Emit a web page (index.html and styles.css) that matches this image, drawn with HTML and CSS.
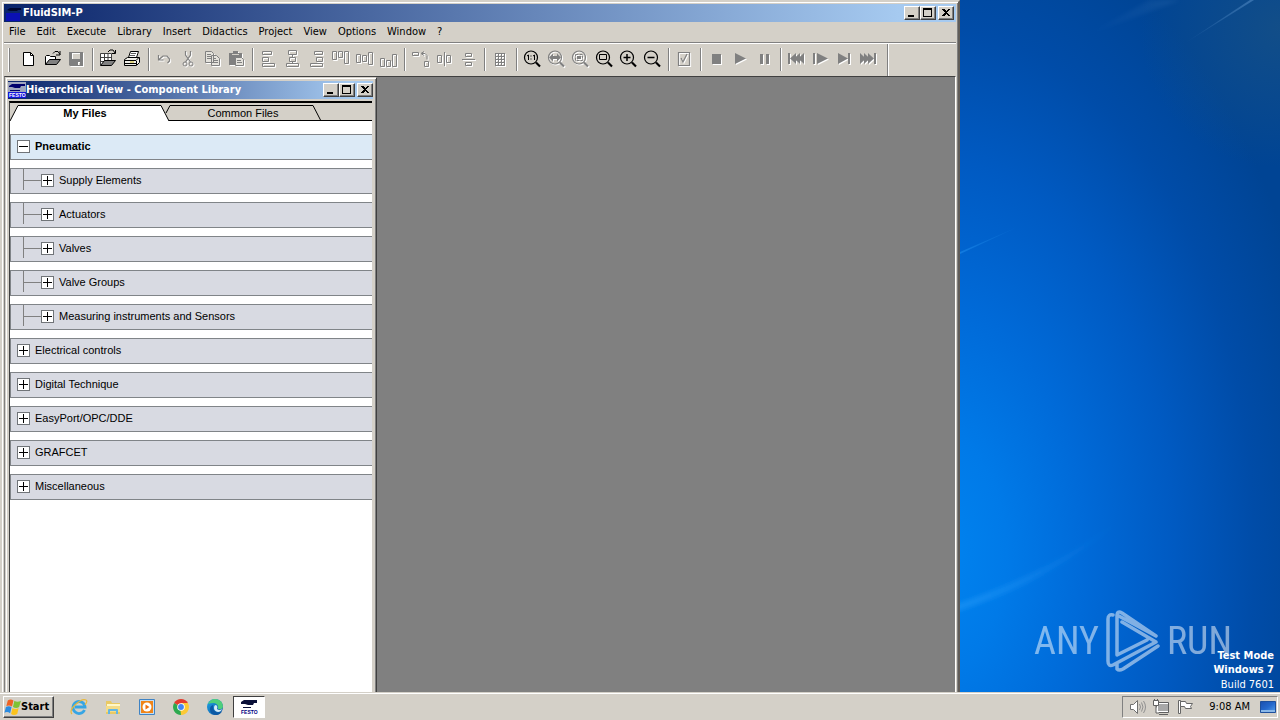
FILE: index.html
```html
<!DOCTYPE html>
<html lang="en">
<head>
<meta charset="utf-8">
<title>FluidSIM-P</title>
<link rel="stylesheet" href="styles.css">
</head>
<body>
<svg class="defs" aria-hidden="true">
  <defs>
    <symbol id="lens" viewBox="0 0 24 24"><circle cx="11" cy="10.500" r="6.500" fill="none" stroke="currentColor" stroke-width="1.200"/><path d="M16 15.500l4 4" stroke="currentColor" stroke-width="2.200"/></symbol>
    <symbol id="min" viewBox="0 0 14 12"><path d="M3 8h6v2H3z"/></symbol>
    <symbol id="max" viewBox="0 0 14 12"><path d="M2 1h9v9H2zM3 3v6h7V3z" fill-rule="evenodd"/></symbol>
    <symbol id="close" viewBox="0 0 14 12"><path d="M3 2h2l2 2 2-2h2L8 5.500l3 3.500H9L7 7 5 9H3l3-3.500z"/></symbol>
    <linearGradient id="scr" x1="0" y1="0" x2="1" y2="1"><stop offset="0" stop-color="#1a4fae"/><stop offset=".5" stop-color="#2468cc"/><stop offset="1" stop-color="#58a2ec"/></linearGradient>
    <linearGradient id="edge" x1="0" y1="0" x2="1" y2="1"><stop offset="0" stop-color="#1fa6e8"/><stop offset="1" stop-color="#0a4f9e"/></linearGradient>
  </defs>
</svg>

<main class="desktop">
  <section class="window" aria-label="FluidSIM-P">
    <header class="titlebar">
      <svg class="app-icon" viewBox="0 0 18 16"><path d="M2 8h14v8H2z" fill="#0a10b4"/><path d="M3 5l3-2h11v2h-3l-1 1H6z" fill="#000730"/></svg>
      <h1 class="title">FluidSIM-P</h1>
      <div class="caption-buttons">
        <button class="cap" aria-label="Minimize"><svg><use href="#min"/></svg></button>
        <button class="cap" aria-label="Maximize"><svg><use href="#max"/></svg></button>
        <button class="cap cap-close" aria-label="Close"><svg><use href="#close"/></svg></button>
      </div>
    </header>
    <nav class="menubar">
      <button>File</button><button>Edit</button><button>Execute</button><button>Library</button><button>Insert</button><button>Didactics</button><button>Project</button><button>View</button><button>Options</button><button>Window</button><button>?</button>
    </nav>
    <div class="toolbar" role="toolbar" aria-label="Standard">
      <div class="group">
        <button aria-label="New"><svg viewBox="0 0 24 24"><path d="M7.500 5.500h7l3 3v10h-10z" fill="#fff" stroke="#000"/><path d="M14.500 5.500v3h3" fill="none" stroke="#000"/></svg></button>
        <button aria-label="Open"><svg viewBox="0 0 24 24"><path d="M5.500 17.500v-8l1-1h3l1 1h5v3" fill="#fff" stroke="#000"/><path d="M5.500 17.500l4-5h11l-4 5z" fill="#808080" stroke="#000"/><path d="M13 6.500l2-2h3l2 3M20 4v4h-4" fill="none" stroke="#000"/></svg></button>
        <button class="off" aria-label="Save" disabled><svg viewBox="0 0 24 24"><path d="M5 5h14v14H6l-1-1zM8 6v6h8V6zM14 15v3h2v-3z" fill-rule="evenodd" fill="#808080"/></svg></button>
      </div>
      <div class="group">
        <button aria-label="Library open"><svg viewBox="0 0 24 24"><path d="M4.500 6.500h11v12h-11z" fill="#fff"/><path d="M4.500 18V6.500h11V14M5 10.500h10M5 14.500h4M8.500 7v7M12 7v7" fill="none" stroke="#404040"/><path d="M4.500 18.500l4-5h11l-4 5z" fill="#808080" stroke="#000"/><path d="M12 5l2-2h3l2 3M19.500 3v3.500H16" fill="none" stroke="#000"/></svg></button>
        <button aria-label="Print"><svg viewBox="0 0 24 24"><path d="M8.500 10.500l2-6h8l-2 6z" fill="#fff" stroke="#000"/><path d="M11 6.500h5M10 8.500h5" stroke="#606060"/><path d="M4.500 12.500l3-2h12v5l-3 3h-12z" fill="#f0eee8" stroke="#000"/><path d="M5 13.500h11l3-3M16.500 14v4" fill="none" stroke="#000"/><path d="M5 16.500h11" stroke="#000"/><path d="M10 15h4" stroke="#d0bc20"/></svg></button>
      </div>
      <div class="group">
        <button class="off" aria-label="Undo" disabled><svg viewBox="0 0 24 24"><path d="M6.500 8v5h5M7 12.500l4-3.500h4l2.500 3v2l-2 2" fill="none" stroke="#808080" stroke-width="1.200"/></svg></button>
        <button class="off" aria-label="Cut" disabled><svg viewBox="0 0 24 24"><path d="M9.500 4v4l5 7M14.500 4v4l-5 7" fill="none" stroke="#808080" stroke-width="1.200"/><circle cx="9" cy="17" r="2" fill="none" stroke="#808080"/><circle cx="15" cy="17" r="2" fill="none" stroke="#808080"/></svg></button>
        <button class="off" aria-label="Copy" disabled><svg viewBox="0 0 24 24"><path d="M5.500 4.500h6l2 2v9h-8zM11.500 8.500h5l3 3v7h-8z" fill="#e4e2dc" stroke="#808080"/><path d="M7 7.500h4M7 9.500h4M7 11.500h4M13 11.500h3M13 13.500h5M13 15.500h5" stroke="#808080"/></svg></button>
        <button class="off" aria-label="Paste" disabled><svg viewBox="0 0 24 24"><path d="M5 6h4V4h5v2h4v12H5z" fill="#808080"/><path d="M8 7.500h7" stroke="#d4d0c8"/><path d="M11.500 10.500h6l2 2v6h-8z" fill="#e4e2dc" stroke="#808080"/><path d="M13 13.500h4M13 15.500h5" stroke="#808080"/></svg></button>
      </div>
      <div class="group">
        <button class="off line" aria-label="Align left" disabled><svg viewBox="0 0 24 24"><path d="M6.500 4.500h9v3h-9zM6.500 10.500h6v4h-6zM6.500 16.500h12v3h-12z"/></svg></button>
        <button class="off line" aria-label="Align center" disabled><svg viewBox="0 0 24 24"><path d="M8.500 3.500h8v4h-8zM9.500 10.500h6v4h-6zM6.500 16.500h12v3h-12zM12.500 8v2M12.500 15v1"/></svg></button>
        <button class="off line" aria-label="Align right" disabled><svg viewBox="0 0 24 24"><path d="M10.500 4.500h8v3h-8zM12.500 10.500h6v4h-6zM6.500 16.500h12v3h-12z"/></svg></button>
        <button class="off line" aria-label="Align top" disabled><svg viewBox="0 0 24 24"><path d="M4.500 4.500h4v8h-4zM10.500 4.500h4v6h-4zM16.500 4.500h4v12h-4z"/></svg></button>
        <button class="off line" aria-label="Align middle" disabled><svg viewBox="0 0 24 24"><path d="M4.500 7.500h4v8h-4zM10.500 8.500h4v6h-4zM16.500 5.500h4v12h-4z"/></svg></button>
        <button class="off line" aria-label="Align bottom" disabled><svg viewBox="0 0 24 24"><path d="M4.500 11.500h4v8h-4zM10.500 13.500h4v6h-4zM16.500 7.500h4v12h-4z"/></svg></button>
      </div>
      <div class="group">
        <button class="off line" aria-label="Rotate" disabled><svg viewBox="0 0 24 24"><path d="M4.500 5.500h6v3h-6zM16.500 14.500h4v5h-4zM13 6.500l3-2M13 6.500l3 2M14 6.500h3l2 2v4"/></svg></button>
        <button class="off line" aria-label="Mirror horizontal" disabled><svg viewBox="0 0 24 24"><path d="M5.500 8.500h4v7h-4zM14.500 8.500h4v7h-4zM12.500 5v14"/></svg></button>
        <button class="off line" aria-label="Mirror vertical" disabled><svg viewBox="0 0 24 24"><path d="M9.500 6.500h6v3h-6zM9.500 15.500h6v3h-6zM6 12.500h13"/></svg></button>
      </div>
      <div class="group">
        <button class="off line" aria-label="Grid" disabled><svg viewBox="0 0 24 24"><path d="M7.500 6v13M10.500 6v13M13.500 6v13M16.500 6v13M7 6.500h10M7 9.500h10M7 12.500h10M7 15.500h10M7 18.500h10"/></svg></button>
      </div>
      <div class="group">
        <button aria-label="Zoom 1:1"><svg viewBox="0 0 24 24"><use href="#lens"/><path d="M7 9l1.500-1v5M13 9l1.500-1v5M11 8.500v1M11 11.500v1" fill="none" stroke="#000"/></svg></button>
        <button class="off gray" aria-label="Previous view" disabled><svg viewBox="0 0 24 24"><use href="#lens"/><path d="M5 10.500l4-4v2.500h4V6.500l4 4-4 4V12H9v2.500z" fill="#808080"/></svg></button>
        <button class="off gray" aria-label="Zoom to fit" disabled><svg viewBox="0 0 24 24"><use href="#lens"/><path d="M7.500 7.500h7v6h-7z" fill="none" stroke="#808080" stroke-dasharray="3 1"/><path d="M9 9h4v3H9z" fill="#808080"/></svg></button>
        <button aria-label="Zoom window"><svg viewBox="0 0 24 24"><use href="#lens"/><path d="M7.500 7.500h7v5h-7z" fill="none" stroke="#000"/></svg></button>
        <button aria-label="Zoom in"><svg viewBox="0 0 24 24"><use href="#lens"/><path d="M7.500 10.500h7M11 7v7" stroke="#000" stroke-width="1.500"/></svg></button>
        <button aria-label="Zoom out"><svg viewBox="0 0 24 24"><use href="#lens"/><path d="M7.500 10.500h7" stroke="#000" stroke-width="1.500"/></svg></button>
      </div>
      <div class="group">
        <button class="off line" aria-label="Check drawing" disabled><svg viewBox="0 0 24 24"><path d="M6.500 5.500h11v13h-11zM9 11l2 4 4-8" stroke-width="1.200"/></svg></button>
      </div>
      <div class="group">
        <button class="off gray" aria-label="Stop" disabled><svg viewBox="0 0 24 24"><path d="M8 7h9v10H8z"/></svg></button>
        <button class="off gray" aria-label="Start" disabled><svg viewBox="0 0 24 24"><path d="M7 6l11 5.500L7 17z"/></svg></button>
        <button class="off gray" aria-label="Pause" disabled><svg viewBox="0 0 24 24"><path d="M8 7h3v10H8zM14 7h3v10h-3z"/></svg></button>
      </div>
      <div class="group">
        <button class="off gray" aria-label="Reset" disabled><svg viewBox="0 0 24 24"><path d="M4 6h2v11H4zM12 6v11l-6-5.500zM16 6v11l-6-5.500zM20 6v11l-6-5.500z"/></svg></button>
        <button class="off gray" aria-label="Single step" disabled><svg viewBox="0 0 24 24"><path d="M5 6h2v11H5zM9 6l11 5.500L9 17z"/></svg></button>
        <button class="off gray" aria-label="Until state change" disabled><svg viewBox="0 0 24 24"><path d="M6 6l10 5.500L6 17zM16 6h2v11h-2z"/></svg></button>
        <button class="off gray" aria-label="Next topic" disabled><svg viewBox="0 0 24 24"><path d="M4 6l6 5.500L4 17zM8 6l6 5.500L8 17zM12 6l6 5.500-6 5.500zM18 6h2v11h-2z"/></svg></button>
      </div>
    </div>

    <div class="mdi">
      <section class="child" aria-label="Component Library">
        <header class="titlebar child-title">
          <svg class="app-icon" viewBox="0 0 18 16"><path d="M0 0h18v16H0z" fill="#9fa6bd"/><path d="M1 4l3-2h13v2h-4l-1 2H7L4 5H1zM2 8h10v1H2z" fill="#00006c"/><path d="M0 10h18v6H0z" fill="#1414dc"/><text x="1" y="15" class="mini light">FESTO</text></svg>
          <h2 class="title">Hierarchical View - Component Library</h2>
          <div class="caption-buttons">
            <button class="cap" aria-label="Minimize"><svg><use href="#min"/></svg></button>
            <button class="cap" aria-label="Maximize"><svg><use href="#max"/></svg></button>
            <button class="cap cap-close" aria-label="Close"><svg><use href="#close"/></svg></button>
          </div>
        </header>
        <div class="library">
          <div class="tabs" role="tablist">
            <button class="tab active" role="tab" aria-selected="true"><svg viewBox="0 0 160 16"><path d="M0 16L8 .5h143l8 15.500" fill="#fff" stroke="#000"/></svg><span>My Files</span></button>
            <button class="tab" role="tab" aria-selected="false"><svg viewBox="0 0 160 16"><path d="M4 8L9 .5h143l8 15.500H8z" fill="#d4d0c8"/><path d="M5 8L9 .5h143l8 15.500M7 15.500h153" fill="none" stroke="#000"/></svg><span>Common Files</span></button>
          </div>
          <ul class="tree">
            <li><button class="row open"><i class="box minus"></i>Pneumatic</button>
              <ul>
                <li><button class="row sub"><i class="box"></i>Supply Elements</button></li>
                <li><button class="row sub"><i class="box"></i>Actuators</button></li>
                <li><button class="row sub"><i class="box"></i>Valves</button></li>
                <li><button class="row sub"><i class="box"></i>Valve Groups</button></li>
                <li><button class="row sub"><i class="box"></i>Measuring instruments and Sensors</button></li>
              </ul>
            </li>
            <li><button class="row"><i class="box"></i>Electrical controls</button></li>
            <li><button class="row"><i class="box"></i>Digital Technique</button></li>
            <li><button class="row"><i class="box"></i>EasyPort/OPC/DDE</button></li>
            <li><button class="row"><i class="box"></i>GRAFCET</button></li>
            <li><button class="row"><i class="box"></i>Miscellaneous</button></li>
          </ul>
        </div>
      </section>
    </div>
  </section>

  <aside class="wallpaper">
    <svg class="rays" viewBox="0 0 320 692" preserveAspectRatio="none">
      <defs>
        <linearGradient id="r1"><stop offset="0" stop-color="#35a8ff" stop-opacity=".35"/><stop offset="1" stop-color="#35a8ff" stop-opacity="0"/></linearGradient>
        <linearGradient id="r2"><stop offset="0" stop-color="#6aa0d8" stop-opacity="0"/><stop offset="1" stop-color="#6aa0d8" stop-opacity=".45"/></linearGradient>
        <filter id="soft"><feGaussianBlur stdDeviation="2"/></filter>
      </defs>
      <path d="M-4 604Q90 572 160 520Q90 582-4 612z" fill="url(#r1)" filter="url(#soft)"/>
      <path d="M0 252L60 226 0 254z" fill="url(#r1)"/>
      <path d="M222 45L290 0h4z" fill="url(#r2)"/>
      <path d="M120 38L190 0h30z" fill="url(#r2)" opacity=".3" filter="url(#soft)"/>
    </svg>
    <div class="watermark">
      <span>ANY</span>
      <svg viewBox="0 0 56 62" fill="none" stroke="#fff" stroke-width="3.500" stroke-linejoin="round" stroke-linecap="round"><path d="M8 5Q3 4 3 9v42Q3 57 8 55L51 32 17 12M51 26L17 3Q12 0 12 6v39L42 30M12 54v5Q14 61 18 59L53 36M12 5L51 26"/></svg>
      <span>RUN</span>
    </div>
    <p class="build"><b>Test Mode</b><b>Windows 7</b><span>Build 7601</span></p>
  </aside>
</main>

<footer class="taskbar">
  <button class="start"><svg viewBox="0 0 18 18"><path d="M4 2q3-2 6 0L8.500 8.500Q5.500 6.500 2.500 8z" fill="#ee6224"/><path d="M11 2.500q3 2 7 0L16 9q-3 2-6.500 0z" fill="#7fc234"/><path d="M2 9q3-1.500 6 0l-1.500 6.500q-3-2-6-.5z" fill="#2b8be0"/><path d="M9 10q3 2 6.500 0L14 16.500q-3.500 2-6.500 0z" fill="#fcc31c"/></svg>Start</button>
  <div class="quick">
    <button aria-label="Internet Explorer"><svg viewBox="0 0 18 18"><path d="M14.500 12A6 6 0 1 1 15 9H5" fill="none" stroke="#36a5e4" stroke-width="2.800"/><path d="M2 16Q-1 13 5 7 12 0 16 2q2 1-1 5" fill="none" stroke="#e8b83a" stroke-width="1.200"/></svg></button>
    <button aria-label="Explorer"><svg viewBox="0 0 18 18"><path d="M2 3h5l1 2h8v11H2z" fill="#e9c964"/><path d="M3 6h13v3H3z" fill="#fff7c8"/><path d="M2 8h14v6H2z" fill="#f4dc88"/><path d="M4 16v-4q0-1 1-1h8q1 0 1 1v4h-2v-3H6v3z" fill="#62b6e4"/></svg></button>
    <button aria-label="Media Player"><svg viewBox="0 0 18 18"><path d="M1.500 1.500h15v15h-15z" fill="#c4def4" stroke="#3f83c4"/><path d="M3 3h12v12H3z" fill="#f08418"/><circle cx="9" cy="9" r="4.500" fill="#fff"/><path d="M7.500 6.500l4 2.500-4 2.500z" fill="#ee7010"/></svg></button>
    <button aria-label="Chrome"><svg viewBox="0 0 18 18"><path d="M9 9L2.100 5A8 8 0 0 1 15.900 5z" fill="#e33b2e"/><path d="M9 9L2.100 5A8 8 0 0 0 9 17z" fill="#2da94f"/><path d="M9 9h-1l1 8A8 8 0 0 0 15.900 5H9z" fill="#fcc934"/><circle cx="9" cy="9" r="3.800" fill="#fff"/><circle cx="9" cy="9" r="2.900" fill="#4285f4"/></svg></button>
    <button aria-label="Edge"><svg viewBox="0 0 18 18"><circle cx="9" cy="9" r="8" fill="url(#edge)"/><path d="M2 6Q5 0 11 1.300 17 3 17 9q-1 3-5 2 1-5-4-6Q4 5 2 6z" fill="#4fcf7c"/><path d="M7 7q-1 6 5 8 2 0 4-2-1 3-5 4-7 0-7-6 0-3 3-4z" fill="#0c59a4"/><path d="M8 10q0-3 2-3 2 1 1 4 2 2 5 0-1 3-4 3-4-1-4-4z" fill="#d4ecf8"/></svg></button>
  </div>
  <button class="task" aria-label="FluidSIM-P"><svg viewBox="0 0 20 16"><path d="M2 3l3-2h13v3h-3l-1 2H9L6 5H2zM4 8h8v1H4z" fill="#0a1038"/><text x="2" y="15" class="mini">FESTO</text></svg></button>
  <div class="tray">
    <svg viewBox="0 0 18 18"><path d="M2.500 6.500h3l4-4v13l-4-4h-3z" fill="#fff" stroke="#707070"/><path d="M11.500 6q2 3 0 6M13.500 4.500q3 4.500 0 9M15.500 3q4 6 0 12" fill="none" stroke="#909090"/></svg>
    <svg viewBox="0 0 18 18"><path d="M5.500 5.500h11v8h-11z" fill="#a8a8a8" stroke="#fff"/><path d="M4.500 4.500h12v10h-12zM7 16.500h9" fill="none" stroke="#606060"/><path d="M1.500 2.500h5v5h-5zM4 8v7h3M2.500 1v2M5.500 1v2" fill="#fff" stroke="#606060"/></svg>
    <svg viewBox="0 0 18 18"><path d="M2.500 2.500h2v13h-2z" fill="#fff" stroke="#666"/><path d="M4.500 3.500h5l1 2h6l-2 3 1 2h-6l-1-2h-4z" fill="#fff" stroke="#666"/></svg>
    <time>9:08 AM</time>
    <svg class="show" viewBox="0 0 18 18"><path d="M1.500 3.500h15v11h-15z" fill="url(#scr)" stroke="#1d4f9c"/><path d="M2 12h14v2H2z" fill="#8ab8e8"/></svg>
  </div>
</footer>
</body>
</html>
```

FILE: styles.css
```css
* { box-sizing: border-box; }
html, body { height: 100%; }
body {
  margin: 0;
  display: flex;
  flex-direction: column;
  overflow: hidden;
  font: 11px/14px "DejaVu Sans Condensed", "Noto Sans", sans-serif;
  color: #000;
  background: #d4d0c8;
}
button { font: inherit; color: inherit; border: 0; padding: 0; background: none; }
svg { display: block; }
ul { list-style: none; margin: 0; padding: 0; }
.defs { position: absolute; width: 0; height: 0; }

.desktop { flex: 1; min-height: 0; display: flex; }

/* application window */
.window {
  width: 75%;
  display: flex;
  flex-direction: column;
  padding: 2px 2px 0;
  border: solid;
  border-width: 2px 2px 0;
  border-color: #d4d0c8 #605c58 #d4d0c8 #d4d0c8;
  box-shadow: inset 1px 1px #fff, inset -1px 0 #808080;
  background: #d4d0c8;
}
.titlebar {
  display: flex;
  align-items: center;
  height: 18px;
  padding-right: 2px;
  background: linear-gradient(90deg, #0a246a, #a6caf0 94%);
  color: #fff;
  flex: none;
}
.title { flex: 1; margin: 0; font-size: 11px; font-weight: bold; line-height: 18px; white-space: nowrap; }
.app-icon { width: 18px; height: 16px; margin-right: 1px; }
.child-title .app-icon { margin-right: 0; }
.mini { font: bold 5px "Liberation Sans", sans-serif; fill: #000080; }
.mini.light { fill: #fff; }
.caption-buttons { display: flex; }
.cap {
  width: 16px;
  height: 14px;
  background: #d4d0c8;
  border: 1px solid;
  border-color: #fff #404040 #404040 #fff;
  box-shadow: inset -1px -1px #808080;
}
.cap svg { width: 14px; height: 12px; shape-rendering: crispEdges; }
.cap-close { margin-left: 2px; }

.menubar { display: flex; height: 20px; flex: none; }
.menubar button { padding: 0 6px 0 5px; line-height: 20px; }

.toolbar {
  display: flex;
  flex: none;
  height: 34px;
  padding-left: 12px;
  border-top: 1px solid #808080;
  box-shadow: inset 0 1px #fff;
  position: relative;
}
.toolbar::before { content: ""; position: absolute; left: 4px; top: 5px; width: 1px; height: 24px; background: #fff; border-right: 1px solid #808080; box-sizing: content-box; }
.group { display: flex; align-items: center; position: relative; margin-right: 8px; padding-bottom: 1px; }
.group::after { content: ""; position: absolute; right: -6px; top: 5px; bottom: 5px; border-left: 1px solid #808080; border-right: 1px solid #fff; }
.group:last-child::after { right: -9px; top: 1px; bottom: 0; }
.group button { width: 24px; height: 24px; }
.group svg { width: 24px; height: 24px; }
.off svg { filter: drop-shadow(1px 1px 0 #fff); }
.line path { fill: none; stroke: #808080; }
.gray { color: #808080; fill: #808080; }

.mdi {
  flex: 1;
  min-height: 0;
  display: flex;
  background: #808080;
  border: solid;
  border-width: 1px 1px 0;
  border-color: #404040 #fff #404040 #808080;
}

/* library window */
.child {
  flex: 0 0 372px;
  display: flex;
  flex-direction: column;
  padding: 3px 3px 0 2px;
  background: #d4d0c8;
  border: solid;
  border-width: 1px 1px 0;
  border-color: #d4d0c8 #404040 #d4d0c8 #d4d0c8;
  box-shadow: inset 1px 1px #fff, inset -1px 0 #808080;
}
.child-title { padding-right: 0; }
.library {
  flex: 1;
  min-height: 0;
  margin: 2px 1px 0;
  background: #fff;
  border-left: 1px solid #404040;
  border-top: 2px solid #000;
  font-family: "Liberation Sans", sans-serif;
}
.tabs {
  display: flex;
  height: 18px;
  align-items: flex-end;
  background: linear-gradient(#000, #000) right bottom / calc(100% - 158px) 1px no-repeat, #d4d0c8;
}
.tab { position: relative; width: 160px; height: 16px; }
.tab svg { position: absolute; inset: 0; width: 160px; height: 16px; }
.tab span { position: relative; line-height: 16px; padding-right: 10px; }
.tab + .tab { margin-left: -9px; }
.tab + .tab span { padding: 0 0 0 4px; }
.tab.active { z-index: 1; font-weight: bold; }

.tree { display: grid; gap: 8px; padding-top: 13px; }
.tree ul { display: grid; gap: 8px; padding-top: 8px; }
.row {
  display: flex;
  align-items: center;
  gap: 5px;
  width: 100%;
  height: 26px;
  padding: 0 0 2px 6px;
  text-align: left;
  background: #d8dae2;
  border: solid #808488;
  border-width: 1px 0 1px 1px;
  position: relative;
}
.row.open { background: #dceaf6; font-weight: bold; }
.row.sub { padding-left: 30px; }
.row.sub::before { content: ""; position: absolute; left: 12px; top: 0; width: 1px; height: 21px; background: #808080; }
.row.sub::after { content: ""; position: absolute; left: 12px; top: 11px; width: 18px; height: 1px; background: #808080; }
.box {
  width: 13px;
  height: 13px;
  border: 1px solid #707478;
  background:
    linear-gradient(#000, #000) center / 9px 1px no-repeat,
    linear-gradient(#000, #000) center / 1px 9px no-repeat,
    #fff;
}
.box.minus { background: linear-gradient(#000, #000) center / 9px 1px no-repeat, #fff; }

/* wallpaper */
.wallpaper {
  flex: 1;
  position: relative;
  display: flex;
  flex-direction: column;
  justify-content: flex-end;
  color: #fff;
  background:
    radial-gradient(circle at 100% 4%, rgba(30, 84, 128, .6), transparent 140px),
    radial-gradient(ellipse 125% 95% at -8% 80%, #0084f0, #007ae8 18%, #006ad8 38%, #005ac2 60%, #004ca8 80%, #004494 100%);
}
.rays { position: absolute; inset: 0; width: 100%; height: 100%; }
.watermark {
  position: absolute;
  right: 48px;
  bottom: 20px;
  display: flex;
  align-items: center;
  gap: 6px;
  opacity: .5;
  font: 400 38px/62px "Roboto Condensed", "Liberation Sans Narrow", sans-serif;
}
.watermark svg { width: 56px; height: 62px; }
.build { position: relative; margin: 0; padding: 0 6px 0 0; display: grid; text-align: right; }
.build b { font-size: 11px; }
.build span { line-height: 15px; }

/* taskbar */
.taskbar {
  flex: none;
  height: 28px;
  display: flex;
  align-items: center;
  padding: 1px 2px 0 3px;
  background: #d4d0c8;
  border-top: 1px solid #d4d0c8;
  box-shadow: inset 0 1px #fff;
}
.start {
  display: flex;
  align-items: center;
  width: 51px;
  height: 22px;
  font-weight: bold;
  border: 1px solid;
  border-color: #fff #404040 #404040 #fff;
  box-shadow: inset -1px -1px #808080;
}
.start svg { width: 17px; height: 18px; }
.quick { display: flex; gap: 16px; margin-left: 16px; }
.quick svg { width: 18px; height: 18px; }
.task {
  display: grid;
  place-items: center;
  width: 32px;
  height: 22px;
  margin-left: 9px;
  background: #fff;
  border: 1px solid;
  border-color: #404040 #fff #fff #404040;
}
.task svg { width: 20px; height: 16px; }
.tray {
  margin-left: auto;
  height: 22px;
  display: flex;
  align-items: center;
  gap: 6px;
  padding: 0 0 0 5px;
  border: 1px solid;
  border-color: #808080 #fff #fff #808080;
}
.tray svg { width: 18px; height: 18px; }
.tray time { padding: 0 3px 0 9px; }
```
